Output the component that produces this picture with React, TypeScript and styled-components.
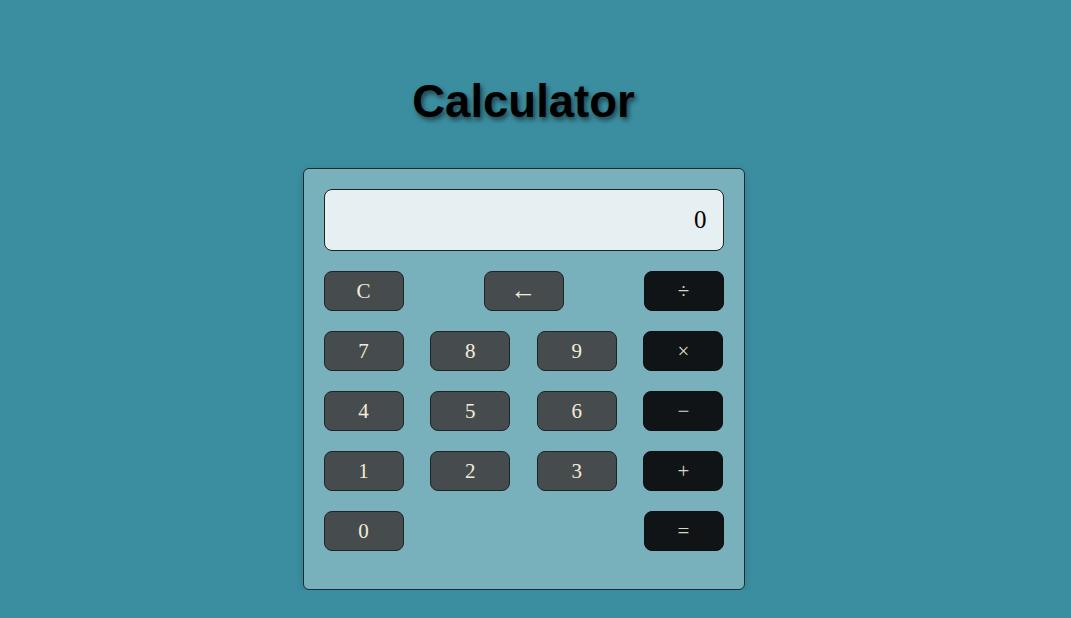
import styled, { createGlobalStyle } from "styled-components";

const GlobalStyle = createGlobalStyle`
  body {
    margin: 0;
    background: #3b8ea0;
    font-family: "Liberation Serif", "Times New Roman", serif;
  }
`;

const Page = styled.div`
  display: flex;
  flex-direction: column;
  align-items: center;
  padding-right: 24px;
`;

const Title = styled.h1`
  margin: 76px 0 40px;
  height: 52px;
  line-height: 52px;
  font-family: "Liberation Sans", Arial, sans-serif;
  font-size: 45.5px;
  font-weight: 700;
  color: #000;
  text-shadow: 2px 3px 5px rgba(0, 0, 0, 0.55);
`;

const Body = styled.div`
  width: 400px;
  padding: 20px 20px 38px;
  background: #78b0bb;
  border: 1px solid #1c2b2f;
  border-radius: 6px;
  box-shadow: 0 2px 8px rgba(0, 0, 0, 0.15);
  display: flex;
  flex-direction: column;
  gap: 20px;
`;

const Display = styled.div`
  height: 60px;
  border: 1px solid #222;
  border-radius: 8px;
  background: #e6f0f3;
  display: flex;
  align-items: center;
  justify-content: flex-end;
  padding: 0 16px;
  font-size: 25px;
  color: #000;
`;

const Row = styled.div`
  display: grid;
  grid-template-columns: repeat(${(p: { $cols: number }) => p.$cols}, 80px);
  justify-content: space-between;
`;

const Key = styled.button<{ $op?: boolean; $big?: boolean }>`
  width: 80px;
  height: 40px;
  padding: 0;
  border: 1px solid ${(p) => (p.$op ? "#0d1011" : "#1f2526")};
  border-radius: 8px;
  background: ${(p) => (p.$op ? "#111416" : "#464c4d")};
  color: ${(p) => (p.$op ? "#d8d4c6" : "#f2ecd9")};
  font-family: "Liberation Serif", "Times New Roman", serif;
  font-size: ${(p) => (p.$big ? "26px" : "21px")};
  line-height: 1;
  cursor: pointer;
`;

const rows: { label: string; op?: boolean }[][] = [
  [{ label: "7" }, { label: "8" }, { label: "9" }, { label: "×", op: true }],
  [{ label: "4" }, { label: "5" }, { label: "6" }, { label: "−", op: true }],
  [{ label: "1" }, { label: "2" }, { label: "3" }, { label: "+", op: true }],
  [{ label: "0" }, { label: "=", op: true }],
];

export default function App() {
  return (
    <>
      <GlobalStyle />
      <Page>
        <Title>Calculator</Title>
        <Body>
          <Display>0</Display>
          <Row $cols={3}>
            <Key>C</Key>
            <Key $big>←</Key>
            <Key $op>÷</Key>
          </Row>
          {rows.map((row, i) => (
            <Row key={i} $cols={row.length}>
              {row.map((k) => (
                <Key key={k.label} $op={k.op}>
                  {k.label}
                </Key>
              ))}
            </Row>
          ))}
        </Body>
      </Page>
    </>
  );
}
